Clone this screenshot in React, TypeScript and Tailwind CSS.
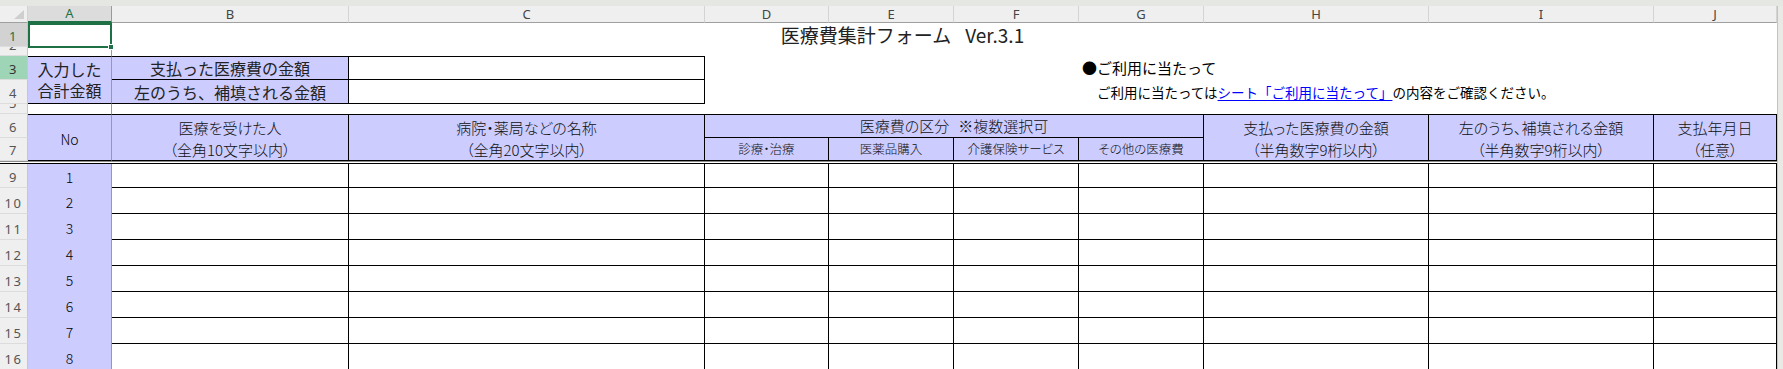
import React from "react";

const COLS =
  "grid grid-cols-[28px_84px_237px_356px_124px_125px_125px_125px_225px_225px_123px]";
const JP = "font-['Noto_Sans_CJK_JP',sans-serif]";
const LAV = "bg-[#ccccff]";
const PALT = "[font-feature-settings:'palt']";

const letters = ["A", "B", "C", "D", "E", "F", "G", "H", "I", "J"];

const RowHead = ({ n, tone }: { n: number; tone?: "sel" | "green" }) => {
  const look =
    tone === "sel"
      ? "bg-[#d2d2d2] text-[#1e7145]"
      : tone === "green"
      ? "bg-[#9fd5b7] text-[#333]"
      : "bg-[#efefef] text-[#555]";
  return (
    <div
      className={`flex items-end justify-center overflow-hidden border-b border-r border-b-[#dcdcdc] border-r-[#c6c6c6] pb-[3px] font-['Noto_Sans',sans-serif] text-[13px] leading-none tracking-[1.5px] ${look}`}
    >
      {n}
    </div>
  );
};

const Head = ({
  lines,
  small,
  className = "",
}: {
  lines: React.ReactNode[];
  small?: boolean;
  className?: string;
}) => (
  <div
    className={`flex flex-col items-center justify-center border-b border-r border-black font-light text-[#111] ${LAV} ${JP} ${PALT} ${
      small ? "text-[12.5px] leading-none" : "text-[15px] leading-[22px]"
    } ${className}`}
  >
    {lines.map((l, i) => (
      <span key={i} className="whitespace-nowrap">
        {l}
      </span>
    ))}
  </div>
);

const rows = [9, 10, 11, 12, 13, 14, 15, 16];

export default function App() {
  return (
    <div className="h-[369px] w-[1783px] overflow-hidden bg-white">
      <div className="h-[6px] bg-[#e4e7e2]" />
      <div className="flex">
        <div className="w-[1777px]">
          {/* column letters */}
          <div className={`${COLS} h-[17px]`}>
            <div className="relative border-b border-r border-b-[#a0a0a0] border-r-[#d4d4d4] bg-[#efefef]">
              <svg className="absolute bottom-[3px] right-[3px]" width="10" height="9" viewBox="0 0 10 9">
                <polygon points="10,0 10,9 0,9" fill="#cfcfcf" />
              </svg>
            </div>
            {letters.map((l, i) => (
              <div
                key={l}
                className={`flex items-center justify-center font-['Noto_Sans',sans-serif] text-[13px] leading-none ${
                  i === 0
                    ? "border-b-2 border-r border-b-[#1e7145] border-r-[#9a9a9a] bg-[#dcdcdc] text-[#1e7145]"
                    : "border-b border-r border-b-[#a0a0a0] border-r-[#d4d4d4] bg-[#efefef] text-[#444]"
                }`}
              >
                {l}
              </div>
            ))}
          </div>

          {/* sheet body */}
          <div
            className={`${COLS} grid-rows-[24px_9px_24px_24px_10px_24px_23px_3px_24px_26px_26px_26px_26px_26px_26px_26px]`}
          >
            {/* row 1 */}
            <RowHead n={1} tone="sel" />
            <div className="relative border-r border-[#9a9a9a]">
              <div className="absolute inset-0 -bottom-px -right-px z-10 border-2 border-[#1e7145]" />
              <div className="absolute -bottom-[3px] -right-[3px] z-20 h-[6px] w-[6px] border border-white bg-[#1e7145]" />
            </div>
            <div
              className={`col-span-9 flex items-center justify-center pr-[84px] text-[19px] text-[#222] ${JP}`}
            >
              医療費集計フォーム<span className="ml-[14px]">Ver.3.1</span>
            </div>

            {/* row 2 */}
            <RowHead n={2} />
            <div className="border-r border-[#9a9a9a]" />
            <div className="col-span-9" />

            {/* row 3 */}
            <RowHead n={3} tone="green" />
            <div
              className={`row-span-2 flex flex-col items-center justify-center border-y border-r border-y-black border-r-[#9a9a9a] text-[16px] leading-[21px] text-[#222] ${LAV} ${JP}`}
            >
              <span>入力した</span>
              <span>合計金額</span>
            </div>
            <div
              className={`flex items-center justify-center border-y border-r border-black text-[16px] text-[#222] ${LAV} ${JP}`}
            >
              支払った医療費の金額
            </div>
            <div className="border-y border-r border-black" />
            <div className="col-span-3" />
            <div className={`col-span-4 flex items-center whitespace-nowrap pl-[3px] text-[15px] text-black ${JP}`}>
              ●ご利用に当たって
            </div>

            {/* row 4 */}
            <RowHead n={4} />
            <div
              className={`flex items-center justify-center border-b border-r border-black text-[16px] text-[#222] ${LAV} ${JP}`}
            >
              左のうち、補填される金額
            </div>
            <div className="border-b border-r border-black" />
            <div className="col-span-3" />
            <div
              className={`col-span-4 flex items-center whitespace-nowrap pl-[18px] text-[13.5px] text-black ${JP}`}
            >
              ご利用に当たっては
              <span className="text-[#0000ff] underline underline-offset-2">シート「ご利用に当たって」</span>
              の内容をご確認ください。
            </div>

            {/* row 5 */}
            <RowHead n={5} />
            <div className="border-r border-[#9a9a9a]" />
            <div className="col-span-9" />

            {/* rows 6-7 */}
            <RowHead n={6} />
            <div
              className={`row-span-2 flex items-center justify-center border-y border-r border-y-black border-r-[#9a9a9a] pt-[4px] text-[14px] font-light ${LAV} ${JP}`}
            >
              No
            </div>
            <Head className="row-span-2 border-t pt-[3px]" lines={["医療を受けた人", "（全角10文字以内）"]} />
            <Head className="row-span-2 border-t pt-[3px]" lines={["病院・薬局などの名称", "（全角20文字以内）"]} />
            <Head
              className="col-span-4 border-t"
              lines={[
                <>
                  医療費の区分<span className="ml-[9px]">※複数選択可</span>
                </>,
              ]}
            />
            <Head className="row-span-2 border-t pt-[3px]" lines={["支払った医療費の金額", "（半角数字9桁以内）"]} />
            <Head className="row-span-2 border-t pt-[3px]" lines={["左のうち、補填される金額", "（半角数字9桁以内）"]} />
            <Head className="row-span-2 border-t pt-[3px]" lines={["支払年月日", "（任意）"]} />

            <RowHead n={7} />
            <Head small lines={["診療・治療"]} />
            <Head small lines={["医薬品購入"]} />
            <Head small lines={["介護保険サービス"]} />
            <Head small lines={["その他の医療費"]} />

            {/* hidden row 8 / freeze line */}
            <div className="col-span-11 border-y border-t-[#8c8c8c] border-b-black bg-white" />

            {/* data rows */}
            {rows.map((r, i) => (
              <React.Fragment key={r}>
                <RowHead n={r} />
                <div
                  className={`flex items-center justify-center border-r border-[#9a9a9a] pt-[2px] text-[14px] font-light text-black ${LAV} ${JP}`}
                >
                  {i + 1}
                </div>
                {letters.slice(1).map((l) => (
                  <div key={l} className="border-b border-r border-black" />
                ))}
              </React.Fragment>
            ))}
          </div>
        </div>
        <div className="h-[363px] w-[6px] border-l border-[#c4c4c4] bg-[#e8eae6]" />
      </div>
    </div>
  );
}
